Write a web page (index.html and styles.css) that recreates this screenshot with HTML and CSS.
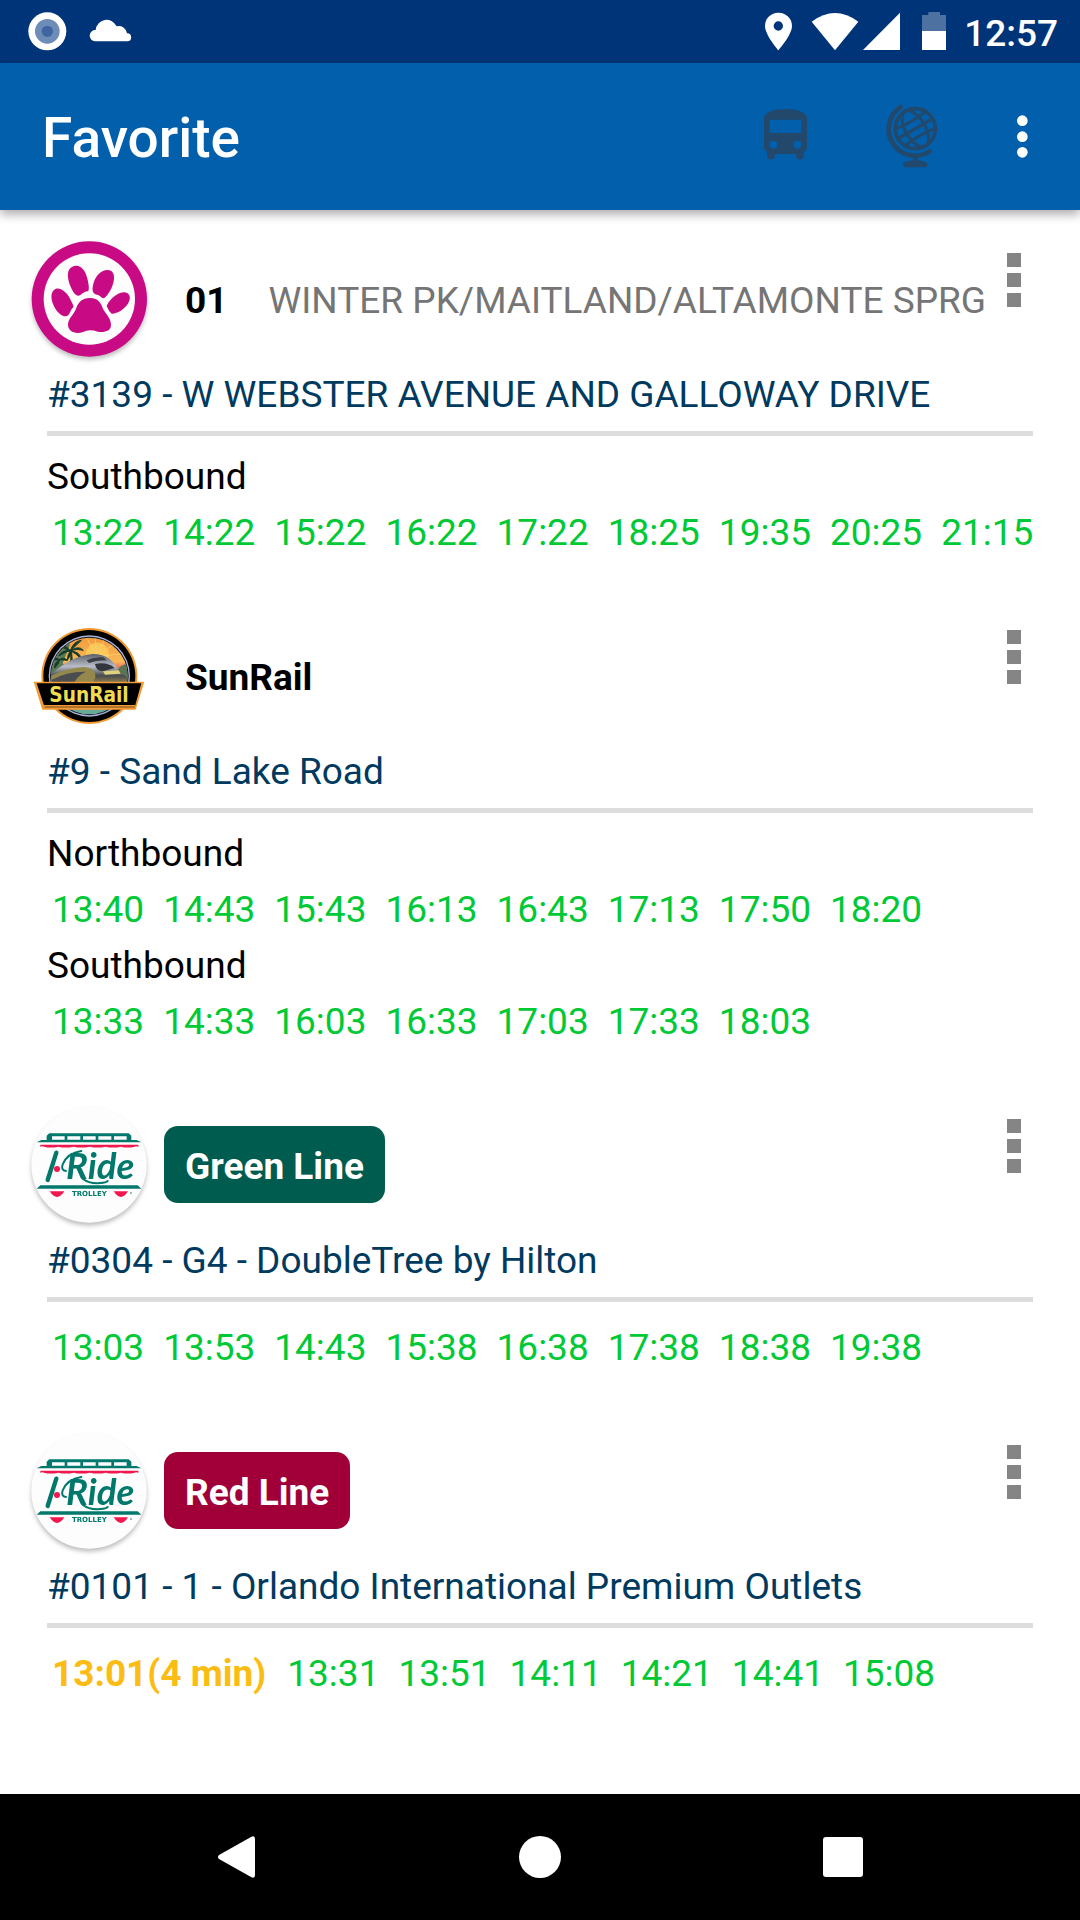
FILE: index.html
```html
<!DOCTYPE html>
<html lang="en">
  <head>
    <meta charset="UTF-8" />
    <meta name="viewport" content="width=device-width, initial-scale=1.0" />
    <title>Favorite</title>
    <link rel="stylesheet" href="styles.css">
  </head>
  <body>
    <div class="status-bar">
      <svg width="140" height="63" viewBox="0 0 420 189">
        <circle cx="142" cy="94" r="57" fill="#fff" />
        <circle cx="142" cy="94" r="37" fill="#6e8cb8" />
        <circle cx="142" cy="94" r="17" fill="#4065a0" />
        <path d="M285 124A17 17 0 0 1 287 90A33 33 0 0 1 350 79A25 25 0 0 1 381 100A12 12 0 0 1 382 124Z" fill="#fff" />
      </svg>
      <div class="status-right">
        <svg width="190" height="63" viewBox="120 0 570 189" fill="#fff">
          <path fill-rule="evenodd" d="M175 38A40 40 0 0 0 135 78C135 105 175 151 175 151S216 105 216 78A40 40 0 0 0 175 38ZM175 64A14 14 0 1 1 175 92A14 14 0 1 1 175 64Z" />
          <path d="M345 151 275 65Q345 13 415 65Z" />
          <path d="M540 38V150H429Z" />
          <path d="M606 94V45H625V36H660V45H678V94Z" opacity="0.3" />
          <path d="M606 93H678V150H606Z" />
        </svg>
        <span class="clock">12:57</span>
      </div>
    </div>

    <header class="app-bar">
      <h1>Favorite</h1>
      <button type="button" aria-label="Routes">
        <svg width="126" height="147" viewBox="6 189 378 441" fill="#22496b">
          <path fill-rule="evenodd" d="M132 356C132 336 162 327 196 327S261 336 261 356V441Q261 451 252 456V467Q252 478 240 478T228 467V462H165V467Q165 478 153 478T141 467V456Q132 451 132 441ZM149 359V399H244V359ZM160 422A12 12 0 1 0 160 446A12 12 0 1 0 160 422ZM232 422A12 12 0 1 0 232 446A12 12 0 1 0 232 422Z" />
        </svg>
      </button>
      <button type="button" aria-label="Agencies">
        <svg width="126" height="147" viewBox="384 189 378 441" fill="none" stroke="#22496b">
          <circle cx="586" cy="386" r="60" stroke-width="11" />
          <g transform="rotate(-30 586 386)" stroke-width="9">
            <ellipse cx="586" cy="386" rx="30" ry="60" />
            <path d="M526 386H646M534 357Q586 365 638 357M534 415Q586 407 638 415" />
          </g>
          <path d="M542 321A79 79 0 0 0 629 454" stroke-width="14" stroke-linecap="round" />
          <path d="M580 468H593V481Q622 484 622 494Q622 502 612 502H560Q549 502 549 494Q549 484 580 481Z" fill="#22496b" stroke="none" />
        </svg>
      </button>
      <button type="button" aria-label="More options">
        <svg width="96" height="147" viewBox="762 189 288 441" fill="#fff">
          <circle cx="907" cy="362" r="16" />
          <circle cx="907" cy="410" r="16" />
          <circle cx="907" cy="457" r="16" />
        </svg>
      </button>
    </header>

    <main class="favorites">
      <section class="favorite">
        <div class="route">
          <svg class="logo" viewBox="78 48 378 378">
            <circle cx="268" cy="237" r="173" fill="#c80a84" />
            <circle cx="268" cy="237" r="137" fill="#fdfdfd" />
            <g fill="#c80a84">
              <path d="M223 138C242 133 255 150 261 172C266 190 269 210 264 214C255 214 248 219 240 226C229 232 219 217 211 198C202 174 197 145 223 138Z" />
              <path d="M324 150C345 151 345 176 338 195C331 215 319 230 312 235C302 233 301 226 291 224C276 221 275 207 281 188C288 166 304 149 324 150Z" />
              <path d="M168 206C187 203 204 222 212 240Q219 253 221 260Q214 266 210 277C205 291 193 293 179 281C159 264 141 217 168 206Z" />
              <path d="M371 217C391 218 393 234 385 249C374 268 350 282 335 281Q326 274 320 258C325 243 349 218 371 217Z" />
              <path d="M268 234C291 233 302 246 307 262C314 281 333 292 333 315C333 334 312 338 293 335Q268 326 249 336C225 344 204 333 204 314C205 293 221 286 229 264C235 246 248 235 268 234Z" />
            </g>
          </svg>
          <span class="badge">01</span>
          <span class="headsign">WINTER PK/MAITLAND/ALTAMONTE SPRG</span>
          <button type="button" class="menu" aria-label="Options">
            <i></i><i></i><i></i>
          </button>
        </div>
        <h2>#3139 - W WEBSTER AVENUE AND GALLOWAY DRIVE</h2>
        <div class="departures">
          <h3>Southbound</h3>
          <ul>
            <li>13:22</li>
            <li>14:22</li>
            <li>15:22</li>
            <li>16:22</li>
            <li>17:22</li>
            <li>18:25</li>
            <li>19:35</li>
            <li>20:25</li>
            <li>21:15</li>
          </ul>
        </div>
      </section>

      <section class="favorite">
        <div class="route">
          <svg class="logo flat" viewBox="18 9 378 378">
            <defs>
              <linearGradient id="sky" x1="0" y1="0" x2="0" y2="1">
                <stop offset="0" stop-color="#f29a3c" />
                <stop offset="0.5" stop-color="#fbb957" />
                <stop offset="0.6" stop-color="#ee7a62" />
                <stop offset="0.7" stop-color="#6fa394" />
              </linearGradient>
              <linearGradient id="train" x1="0" y1="0" x2="0" y2="1">
                <stop offset="0" stop-color="#5c606b" />
                <stop offset="0.4" stop-color="#b9bdc8" />
                <stop offset="0.7" stop-color="#4a4b4e" />
                <stop offset="1" stop-color="#a08f4c" />
              </linearGradient>
              <clipPath id="disc"><circle cx="208" cy="198" r="115" /></clipPath>
            </defs>
            <circle cx="208" cy="198" r="144" fill="#f29a35" />
            <circle cx="208" cy="198" r="138" fill="#000" />
            <circle cx="208" cy="198" r="122" fill="#aab4dc" />
            <circle cx="208" cy="198" r="118" fill="#10171c" />
            <g clip-path="url(#disc)">
              <path d="M88 80H328V230H88Z" fill="url(#sky)" />
              <circle cx="232" cy="132" r="34" fill="#ffdc62" opacity="0.6" />
              <path d="M232 140 200 84M232 140 225 84M232 140 255 84M232 140 290 96M232 140 315 130" stroke="#ffd777" stroke-width="2" />
              <path d="M88 100 132 84 150 104 128 160 150 185 88 220Z" fill="#577a54" />
              <path d="M146 182Q154 150 149 119L154 116Q162 150 155 182Z" fill="#1d3b27" />
              <path d="M151 122Q125 92 108 112Q130 110 151 122Q128 119 116 138Q134 126 151 122Q142 134 142 150Q155 136 151 122Q160 94 184 91Q171 104 151 122Q176 105 190 121Q172 115 151 122Q181 126 182 145Q169 131 151 122ZM119 149Q100 137 93 151Q109 149 119 149Q103 157 104 174Q117 161 119 149Q130 140 143 151Q129 150 119 149Z" fill="#153c2b" stroke="#153c2b" stroke-width="3" />
              <path d="M292 182Q300 164 326 161V220H290Z" fill="#587453" />
              <path d="M80 204C124 163 171 135 218 132C260 132 284 153 297 186L322 202V225H80Z" fill="url(#train)" />
              <path d="M80 204Q135 174 192 171Q229 174 226 201L218 225H80Z" fill="#94884c" />
              <path d="M94 210Q140 184 198 185Q174 195 160 222H94Z" fill="#4b4d51" />
              <path d="M200 151Q224 139 250 142L260 151Q225 152 207 159Z" fill="#3c3f45" />
              <path d="M225 162Q262 155 284 174L251 183Q229 186 225 162Z" fill="#32353c" />
              <path d="M249 184 296 181 302 191 255 194Z" fill="#ded37a" />
              <path d="M141 285H276V325H141Z" fill="#68a897" />
            </g>
            <path d="M41 215H373L359 260 347 299H67Z" fill="#f29a35" />
            <path d="M50 220H364L344 292H74Z" fill="#000" />
            <text class="logo-sunrail" x="207" y="277">SunRail</text>
            <path d="M69 285H345V290H70Z" fill="#f29a35" />
          </svg>
          <span class="badge">SunRail</span>
          <button type="button" class="menu" aria-label="Options">
            <i></i><i></i><i></i>
          </button>
        </div>
        <h2>#9 - Sand Lake Road</h2>
        <div class="departures">
          <h3>Northbound</h3>
          <ul>
            <li>13:40</li>
            <li>14:43</li>
            <li>15:43</li>
            <li>16:13</li>
            <li>16:43</li>
            <li>17:13</li>
            <li>17:50</li>
            <li>18:20</li>
          </ul>
          <h3>Southbound</h3>
          <ul>
            <li>13:33</li>
            <li>14:33</li>
            <li>16:03</li>
            <li>16:33</li>
            <li>17:03</li>
            <li>17:33</li>
            <li>18:03</li>
          </ul>
        </div>
      </section>

      <section class="favorite">
        <div class="route">
          <svg class="logo" viewBox="18 -24 378 378">
            <g id="trolley">
              <circle cx="207" cy="165" r="173" fill="#fdfdfd" />
              <path d="M50 97 64 90H80V77L88 70H326L334 77V90H350L364 97Z" fill="#00786c" />
              <path d="M96 79H134V89H96ZM142 79H181V89H142ZM189 79H227V89H189ZM235 79H274V89H235ZM282 79H320V89H282Z" fill="#fdfdfd" />
              <path d="M61 104H355V111Q349 107 344 110Q321 115 303 110Q280 115 257 110Q234 115 209 110Q184 115 161 110Q138 115 115 110Q92 115 72 110Q66 107 61 111Z" fill="#f0184f" />
              <g fill="none" stroke="#00786c" stroke-linecap="round">
                <path d="M109 128 83 210" stroke-width="13" />
                <path d="M138 183Q122 181 128 163Q142 129 184 123" stroke-width="6" />
                <path d="M188 206Q208 222 242 219Q258 218 263 213" stroke-width="6" />
              </g>
              <circle cx="111" cy="177" r="9" fill="#f0184f" />
              <text class="logo-ride" x="138" y="207">Ride</text>
              <path d="M50 236 61 226H353L364 236Z" fill="#00786c" />
              <path d="M89 244H133Q111 278 89 244ZM281 244H324Q303 278 281 244Z" fill="#f0184f" />
              <text class="logo-trolley" x="208" y="258">TROLLEY</text>
              <circle cx="333" cy="249" r="3" fill="#70aaa4" />
            </g>
          </svg>
          <span class="badge green">Green Line</span>
          <button type="button" class="menu" aria-label="Options">
            <i></i><i></i><i></i>
          </button>
        </div>
        <h2>#0304 - G4 - DoubleTree by Hilton</h2>
        <div class="departures">
          <ul>
            <li>13:03</li>
            <li>13:53</li>
            <li>14:43</li>
            <li>15:38</li>
            <li>16:38</li>
            <li>17:38</li>
            <li>18:38</li>
            <li>19:38</li>
          </ul>
        </div>
      </section>

      <section class="favorite">
        <div class="route">
          <svg class="logo" viewBox="18 -24 378 378"><use href="#trolley" /></svg>
          <span class="badge red">Red Line</span>
          <button type="button" class="menu" aria-label="Options">
            <i></i><i></i><i></i>
          </button>
        </div>
        <h2>#0101 - 1 - Orlando International Premium Outlets</h2>
        <div class="departures">
          <ul>
            <li class="soon">13:01(4 min)</li>
            <li>13:31</li>
            <li>13:51</li>
            <li>14:11</li>
            <li>14:21</li>
            <li>14:41</li>
            <li>15:08</li>
          </ul>
        </div>
      </section>
    </main>

    <nav class="nav-bar">
      <button type="button" aria-label="Back">
        <svg width="42" height="42" viewBox="0 0 42 42">
          <path d="M2 19 34 1Q38 -1 38 3V39Q38 43 34 41L2 23Q0 21 2 19Z" fill="#fff" />
        </svg>
      </button>
      <button type="button" aria-label="Home">
        <svg width="42" height="42" viewBox="0 0 42 42">
          <circle cx="21" cy="21" r="21" fill="#fff" />
        </svg>
      </button>
      <button type="button" aria-label="Recent apps">
        <svg width="42" height="42" viewBox="0 0 42 42">
          <rect x="2" y="1" width="40" height="40" rx="3" fill="#fff" />
        </svg>
      </button>
    </nav>
  </body>
</html>
```

FILE: styles.css
```css
* {
  box-sizing: border-box;
}

body {
  display: flex;
  flex-direction: column;
  min-height: 100vh;
  margin: 0;
  background: #fff;
  color: #000;
  font-family: Roboto, sans-serif;
  font-size: 37px;
  line-height: 51px;
}

h1,
h2,
h3,
ul {
  margin: 0;
  padding: 0;
  font-size: 37px;
  font-weight: 400;
}

button {
  padding: 0;
  border: none;
  background: none;
  cursor: pointer;
}

svg {
  display: block;
  flex: none;
}

.status-bar {
  display: flex;
  justify-content: space-between;
  height: 63px;
  background: #003479;
}

.status-right {
  display: flex;
  align-items: center;
  gap: 14px;
  padding-right: 22px;
}

.clock {
  padding-top: 4px;
  color: #fff;
  font-weight: 500;
}

.app-bar {
  display: flex;
  align-items: center;
  height: 147px;
  padding: 0 10px 0 42px;
  background: #015fac;
  box-shadow: 0 4px 10px rgba(0, 0, 0, 0.35);
}

.app-bar h1 {
  flex: 1;
  padding-top: 4px;
  color: #fff;
  font-size: 55px;
  font-weight: 500;
}

.favorites {
  display: flex;
  flex: 1;
  flex-direction: column;
  gap: 50px;
  padding: 26px 47px 50px;
}

.route {
  display: flex;
  align-items: center;
  gap: 12px;
  height: 126px;
  margin-left: -21px;
}

.logo {
  width: 126px;
  height: 126px;
  filter: drop-shadow(0 3px 2px rgba(0, 0, 0, 0.25));
}

.logo.flat {
  filter: none;
}

.logo-ride {
  fill: #00786c;
  font-family: Lato, sans-serif;
  font-size: 110px;
  font-style: italic;
  font-weight: 700;
}

.logo-trolley {
  fill: #00786c;
  font-family: "DejaVu Sans", sans-serif;
  font-size: 21px;
  font-weight: 700;
  text-anchor: middle;
}

.logo-sunrail {
  fill: #f0dc50;
  font-family: "DejaVu Sans Condensed", "DejaVu Sans", sans-serif;
  font-size: 62px;
  font-weight: 700;
  text-anchor: middle;
}

.badge {
  margin-bottom: 1px;
  padding: 15px 21px 11px;
  border-radius: 14px;
  font-weight: 700;
  white-space: nowrap;
}

.badge.green {
  background: #005c4f;
  color: #fff;
}

.badge.red {
  background: #a00037;
  color: #fff;
}

.headsign {
  padding: 2px 0 0 8px;
  color: #757575;
  white-space: nowrap;
}

.menu {
  display: flex;
  flex-direction: column;
  align-items: center;
  align-self: flex-start;
  gap: 6px;
  width: 30px;
  margin: 0 4px 0 auto;
  padding-top: 17px;
}

.menu i {
  width: 14px;
  height: 14px;
  background: #858585;
}

.favorite h2 {
  margin-top: 7px;
  padding-bottom: 11px;
  border-bottom: 5px solid #ddd;
  color: #003a5f;
}

.departures {
  padding-top: 15px;
}

/* the nine-trip row runs right up to the margin */
.departures ul {
  display: flex;
  flex-wrap: wrap;
  gap: 0 19px;
  margin-right: -10px;
  padding: 5px 0 5px 5px;
  color: #00c936;
  list-style: none;
}

.soon {
  padding-right: 2px;
  color: #fbbc14;
  font-weight: 700;
}

.nav-bar {
  display: flex;
  align-items: center;
  justify-content: center;
  height: 126px;
  background: #000;
}

.nav-bar button {
  display: flex;
  justify-content: center;
  width: 28%;
}
```
